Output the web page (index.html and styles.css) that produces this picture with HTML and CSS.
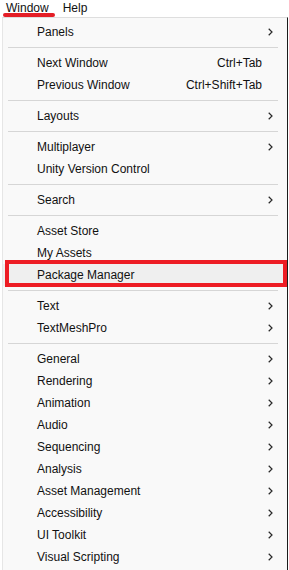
FILE: index.html
```html
<!DOCTYPE html>
<html lang="en">
<head>
  <meta charset="UTF-8" />
  <meta name="viewport" content="width=device-width, initial-scale=1" />
  <title>Window Menu</title>
  <link rel="stylesheet" href="styles.css">
</head>
<body>
  <div class="menubar">
    <span class="menubar-item marked">Window</span>
    <span class="menubar-item">Help</span>
  </div>

  <ul class="menu">
    <li class="item">
      <span class="label">Panels</span>
      <span class="arrow"><svg width="5" height="8" viewBox="0 0 5 8"><polyline points="0.7,0.8 4,4 0.7,7.2" /></svg></span>
    </li>
    <li class="sep"></li>
    <li class="item">
      <span class="label">Next Window</span>
      <span class="shortcut">Ctrl+Tab</span>
      <span class="arrow"></span>
    </li>
    <li class="item">
      <span class="label">Previous Window</span>
      <span class="shortcut">Ctrl+Shift+Tab</span>
      <span class="arrow"></span>
    </li>
    <li class="sep"></li>
    <li class="item">
      <span class="label">Layouts</span>
      <span class="arrow"><svg width="5" height="8" viewBox="0 0 5 8"><polyline points="0.7,0.8 4,4 0.7,7.2" /></svg></span>
    </li>
    <li class="sep"></li>
    <li class="item">
      <span class="label">Multiplayer</span>
      <span class="arrow"><svg width="5" height="8" viewBox="0 0 5 8"><polyline points="0.7,0.8 4,4 0.7,7.2" /></svg></span>
    </li>
    <li class="item">
      <span class="label">Unity Version Control</span>
      <span class="arrow"></span>
    </li>
    <li class="sep"></li>
    <li class="item">
      <span class="label">Search</span>
      <span class="arrow"><svg width="5" height="8" viewBox="0 0 5 8"><polyline points="0.7,0.8 4,4 0.7,7.2" /></svg></span>
    </li>
    <li class="sep"></li>
    <li class="item">
      <span class="label">Asset Store</span>
      <span class="arrow"></span>
    </li>
    <li class="item">
      <span class="label">My Assets</span>
      <span class="arrow"></span>
    </li>
    <li class="item highlighted">
      <span class="label">Package Manager</span>
      <span class="arrow"></span>
    </li>
    <li class="sep"></li>
    <li class="item">
      <span class="label">Text</span>
      <span class="arrow"><svg width="5" height="8" viewBox="0 0 5 8"><polyline points="0.7,0.8 4,4 0.7,7.2" /></svg></span>
    </li>
    <li class="item">
      <span class="label">TextMeshPro</span>
      <span class="arrow"><svg width="5" height="8" viewBox="0 0 5 8"><polyline points="0.7,0.8 4,4 0.7,7.2" /></svg></span>
    </li>
    <li class="sep"></li>
    <li class="item">
      <span class="label">General</span>
      <span class="arrow"><svg width="5" height="8" viewBox="0 0 5 8"><polyline points="0.7,0.8 4,4 0.7,7.2" /></svg></span>
    </li>
    <li class="item">
      <span class="label">Rendering</span>
      <span class="arrow"><svg width="5" height="8" viewBox="0 0 5 8"><polyline points="0.7,0.8 4,4 0.7,7.2" /></svg></span>
    </li>
    <li class="item">
      <span class="label">Animation</span>
      <span class="arrow"><svg width="5" height="8" viewBox="0 0 5 8"><polyline points="0.7,0.8 4,4 0.7,7.2" /></svg></span>
    </li>
    <li class="item">
      <span class="label">Audio</span>
      <span class="arrow"><svg width="5" height="8" viewBox="0 0 5 8"><polyline points="0.7,0.8 4,4 0.7,7.2" /></svg></span>
    </li>
    <li class="item">
      <span class="label">Sequencing</span>
      <span class="arrow"><svg width="5" height="8" viewBox="0 0 5 8"><polyline points="0.7,0.8 4,4 0.7,7.2" /></svg></span>
    </li>
    <li class="item">
      <span class="label">Analysis</span>
      <span class="arrow"><svg width="5" height="8" viewBox="0 0 5 8"><polyline points="0.7,0.8 4,4 0.7,7.2" /></svg></span>
    </li>
    <li class="item">
      <span class="label">Asset Management</span>
      <span class="arrow"><svg width="5" height="8" viewBox="0 0 5 8"><polyline points="0.7,0.8 4,4 0.7,7.2" /></svg></span>
    </li>
    <li class="item">
      <span class="label">Accessibility</span>
      <span class="arrow"><svg width="5" height="8" viewBox="0 0 5 8"><polyline points="0.7,0.8 4,4 0.7,7.2" /></svg></span>
    </li>
    <li class="item">
      <span class="label">UI Toolkit</span>
      <span class="arrow"><svg width="5" height="8" viewBox="0 0 5 8"><polyline points="0.7,0.8 4,4 0.7,7.2" /></svg></span>
    </li>
    <li class="item">
      <span class="label">Visual Scripting</span>
      <span class="arrow"><svg width="5" height="8" viewBox="0 0 5 8"><polyline points="0.7,0.8 4,4 0.7,7.2" /></svg></span>
    </li>
  </ul>
</body>
</html>
```

FILE: styles.css
```css
/* Unity editor style "Window" menu */
body {
  font-family: 'Liberation Sans', Arial, sans-serif;
  font-size: 12px;
  color: #111;
  background: #fff;
  margin: 0;
  overflow: hidden;
}

/* Top menu bar */
.menubar {
  display: flex;
  gap: 14px;
  height: 17px;
  line-height: 17px;
  padding-left: 6px;
  background: #fff;
}

.menubar-item {
  position: relative;
}

/* red marker stroke under "Window" */
.menubar-item.marked::after {
  content: '';
  position: absolute;
  left: -3px;
  right: -6px;
  top: 13px;
  height: 4px;
  border-radius: 2px;
  background: #e41e26;
}

/* Dropdown panel */
.menu {
  list-style: none;
  margin: 0 0 0 2px;
  padding: 3px 0 0;
  width: 286px;
  box-sizing: border-box;
  background: #f9f9f9;
  border-top: 1px solid #dedede;
  border-left: 1px solid #e6e6e6;
  border-right: 1px solid #1c1c1c;
  min-height: 560px;
}

.item {
  display: flex;
  align-items: center;
  height: 22px;
  padding: 0 14px 0 34px;
  white-space: nowrap;
}

.label {
  flex: 1;
}

.shortcut {
  text-align: right;
}

.arrow {
  display: flex;
  align-items: center;
  width: 5px;
  margin-left: 6px;
}

.arrow polyline {
  fill: none;
  stroke: #2a2a2a;
  stroke-width: 1.2;
}

.sep {
  height: 1px;
  margin: 4px 9px 4px 5px;
  background: #d6d6d6;
}

/* Package Manager row, boxed in red */
.item.highlighted {
  position: relative;
  background: #efefef;
}

.item.highlighted::after {
  content: '';
  position: absolute;
  left: 2px;
  right: 0;
  top: -4px;
  bottom: -1px;
  border: 4px solid #ed1c24;
}
```
